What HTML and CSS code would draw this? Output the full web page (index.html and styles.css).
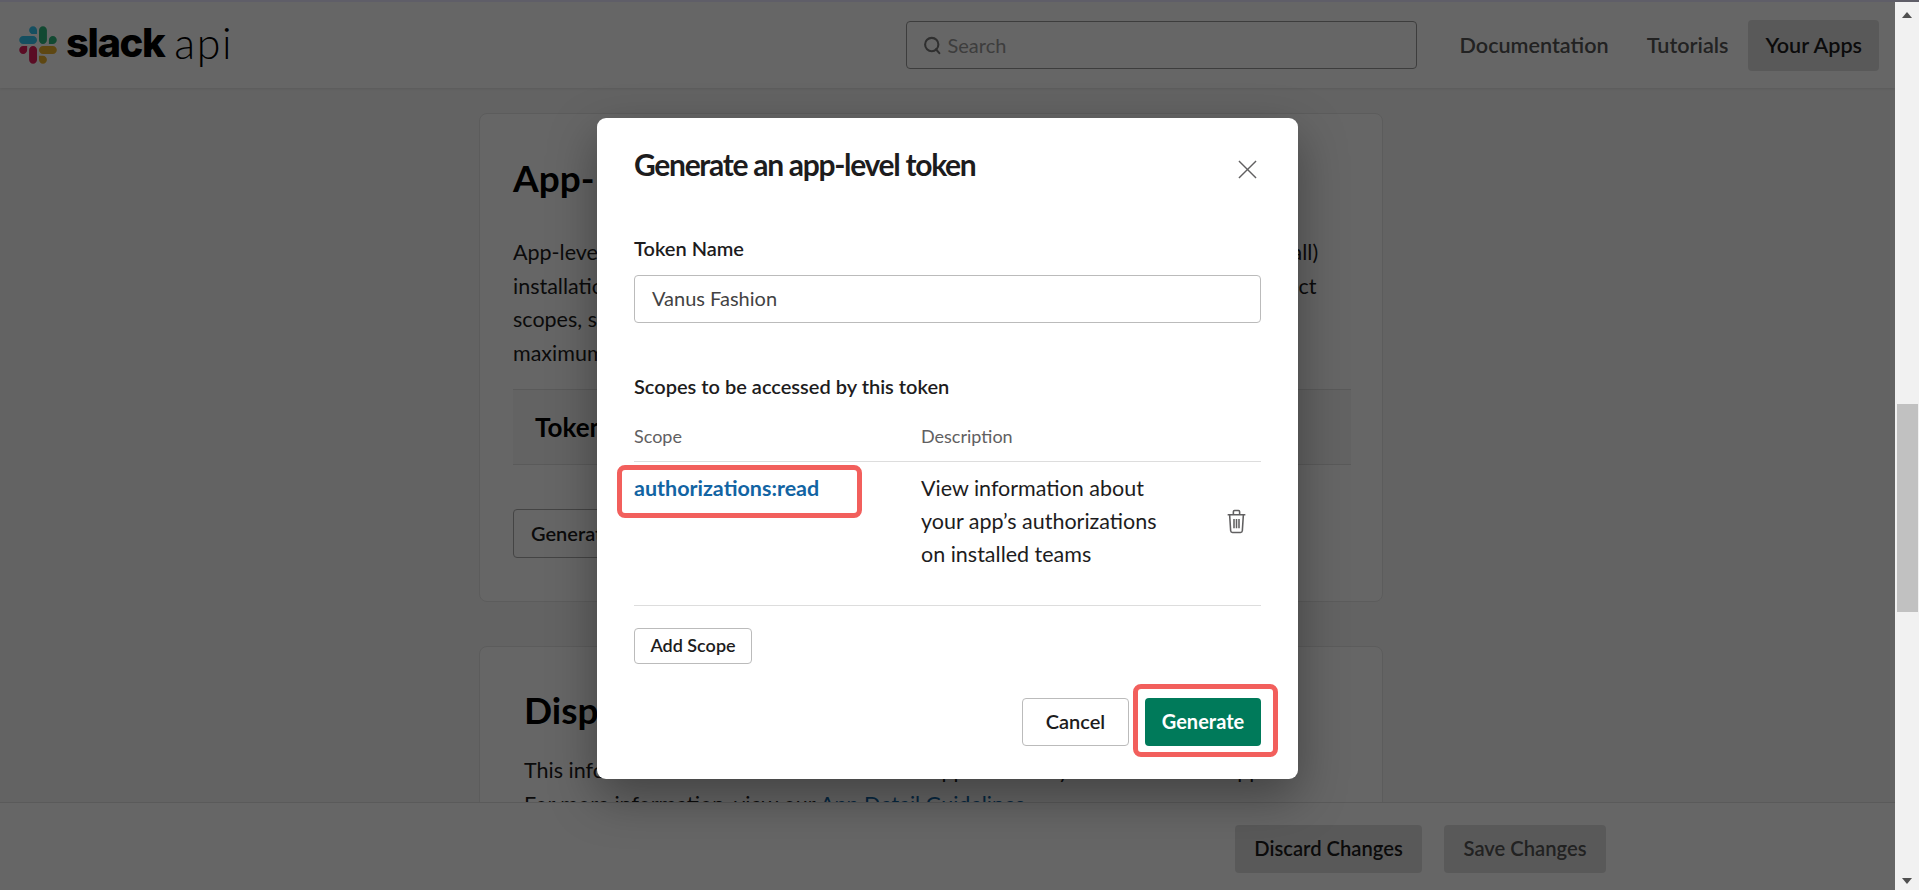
FILE: index.html
```html
<!DOCTYPE html>
<html lang="en">
<head>
<meta charset="utf-8">
<title>Slack API</title>
<link rel="stylesheet" href="styles.css">
</head>
<body>
<div class="top-strip"></div>
<div class="window">
  <div class="app">
    <header class="site-header">
      <a class="logo">
        <svg class="logo-mark" viewBox="0 0 127 127" aria-hidden="true">
          <path d="M27.2 80c0 7.3-5.9 13.2-13.2 13.2C6.7 93.2.8 87.3.8 80c0-7.3 5.9-13.2 13.2-13.2h13.2V80zm6.6 0c0-7.3 5.9-13.2 13.2-13.2 7.3 0 13.2 5.9 13.2 13.2v33c0 7.3-5.9 13.2-13.2 13.2-7.3 0-13.2-5.9-13.2-13.2V80z" fill="#E01E5A"/>
          <path d="M47 27c-7.3 0-13.2-5.9-13.2-13.2C33.8 6.5 39.7.6 47 .6c7.3 0 13.2 5.9 13.2 13.2V27H47zm0 6.7c7.3 0 13.2 5.9 13.2 13.2 0 7.3-5.9 13.2-13.2 13.2H13.9C6.6 60.1.7 54.2.7 46.9c0-7.3 5.9-13.2 13.2-13.2H47z" fill="#36C5F0"/>
          <path d="M99.9 46.9c0-7.3 5.9-13.2 13.2-13.2 7.3 0 13.2 5.9 13.2 13.2 0 7.3-5.9 13.2-13.2 13.2H99.9V46.9zm-6.6 0c0 7.3-5.9 13.2-13.2 13.2-7.3 0-13.2-5.9-13.2-13.2V13.8C66.9 6.5 72.8.6 80.1.6c7.3 0 13.2 5.9 13.2 13.2v33.1z" fill="#2EB67D"/>
          <path d="M80.1 99.8c7.3 0 13.2 5.9 13.2 13.2 0 7.3-5.9 13.2-13.2 13.2-7.3 0-13.2-5.9-13.2-13.2V99.8h13.2zm0-6.6c-7.3 0-13.2-5.9-13.2-13.2 0-7.3 5.9-13.2 13.2-13.2h33.1c7.3 0 13.2 5.9 13.2 13.2 0 7.3-5.9 13.2-13.2 13.2H80.1z" fill="#ECB22E"/>
        </svg>
        <span class="logo-slack">slack</span>
        <span class="logo-api">api</span>
      </a>
      <div class="search">
        <svg class="search-icon" viewBox="0 0 20 20" aria-hidden="true">
          <circle cx="9.2" cy="9" r="7" fill="none" stroke="currentColor" stroke-width="2.2"/>
          <path d="M13.6 14l3.6 4" fill="none" stroke="currentColor" stroke-width="2.2" stroke-linecap="round"/>
        </svg>
        <span class="search-text">Search</span>
      </div>
      <nav class="nav">
        <a class="nav-link">Documentation</a>
        <a class="nav-link">Tutorials</a>
        <a class="nav-link nav-active">Your Apps</a>
      </nav>
    </header>

    <main class="content">
      <section class="card card-tokens">
        <h2 class="card-title">App-Level Tokens</h2>
        <p class="card-text">App-level tokens allow your app to use platform features that apply on multiple (or all)<br>installations. These tokens are associated with your app that can allow you to connect<br>scopes, so you can control exactly what a token is allowed to access. You can have a<br>maximum of 50 tokens per app.</p>
        <div class="token-table-head">Token Name</div>
        <button class="btn btn-plain">Generate Token and Scopes</button>
      </section>
      <section class="card card-display">
        <h2 class="card-title">Display Information</h2>
        <p class="card-text">This information will be shown in the Slack app's directory and also on this app<br>For more information, view our <a class="link">App Detail Guidelines</a>.</p>
      </section>
    </main>

    <footer class="save-bar">
      <button class="btn btn-muted btn-discard">Discard Changes</button>
      <button class="btn btn-muted btn-save">Save Changes</button>
    </footer>

    <div class="overlay">
      <div class="modal">
        <div class="modal-head">
          <h1 class="modal-title">Generate an app-level token</h1>
          <svg class="modal-close" viewBox="0 0 20 20" aria-hidden="true">
            <path d="M1 1l18 18M19 1L1 19" fill="none" stroke="currentColor" stroke-width="1.5"/>
          </svg>
        </div>
        <label class="field-label">Token Name</label>
        <div class="field-input">Vanus Fashion</div>
        <h3 class="scopes-label">Scopes to be accessed by this token</h3>
        <div class="scope-grid scope-head">
          <span>Scope</span>
          <span>Description</span>
        </div>
        <div class="scope-grid scope-row">
          <a class="scope-name marked">authorizations:read</a>
          <span class="scope-desc">View information about your app’s authorizations on installed teams</span>
          <svg class="trash" viewBox="0 0 20 24" aria-hidden="true">
            <path d="M1.5 5.5h17M7 5V2.6c0-.6.5-1.1 1.1-1.1h3.8c.6 0 1.1.5 1.1 1.1V5M3.4 5.5l1 15.4c.1 1 .8 1.6 1.7 1.6h7.8c.9 0 1.6-.6 1.7-1.6l1-15.4M7.6 9.5v9M10 9.5v9M12.4 9.5v9" fill="none" stroke="currentColor" stroke-width="1.5"/>
          </svg>
        </div>
        <button class="btn btn-add">Add Scope</button>
        <div class="modal-actions">
          <button class="btn btn-cancel">Cancel</button>
          <button class="btn btn-generate marked-wide">Generate</button>
        </div>
      </div>
    </div>
  </div>
  <aside class="scrollbar">
    <span class="arrow arrow-up"></span>
    <span class="thumb"></span>
    <span class="arrow arrow-down"></span>
  </aside>
</div>
</body>
</html>
```

FILE: styles.css
```css
* { box-sizing: border-box; }

html, body {
  height: 100%;
  margin: 0;
  overflow: hidden;
}

body {
  display: flex;
  flex-direction: column;
  background: #fff;
  font-family: Lato, "Liberation Sans", sans-serif;
  color: #1d1c1d;
}

.top-strip {
  height: 2px;
  background: #5f5e68;
  flex: none;
}

.window {
  flex: 1;
  display: flex;
  min-height: 0;
}

.app {
  position: relative;
  flex: 1;
  display: flex;
  flex-direction: column;
  min-width: 0;
  background: #f8f8f8;
  overflow: hidden;
}

/* Header */
.site-header {
  flex: none;
  height: 86px;
  display: flex;
  align-items: center;
  padding: 0 16px 0 19px;
  background: #fff;
  box-shadow: 0 1px 3px rgba(0, 0, 0, .1);
  z-index: 1;
}

.logo {
  display: flex;
  align-items: center;
  color: #000;
  margin-right: auto;
}

.logo-mark {
  width: 38px;
  height: 38px;
  margin-right: 9px;
}

.logo-slack {
  font-family: Inter, sans-serif;
  font-weight: 800;
  font-size: 40px;
  line-height: 50px;
  letter-spacing: -1.4px;
  margin-right: 10px;
  margin-top: -4px;
}

.logo-api {
  font-family: Lato, sans-serif;
  font-weight: 300;
  font-size: 43px;
  line-height: 50px;
  letter-spacing: 1.6px;
  margin-top: -4px;
}

.search {
  width: 511px;
  height: 48px;
  display: flex;
  align-items: center;
  padding-left: 16px;
  border: 1px solid #999;
  border-radius: 4px;
  color: #999;
  font-size: 20px;
  margin-right: 25px;
}

.search-icon {
  width: 19px;
  height: 19px;
  color: #777;
  margin-right: 6px;
}

.nav {
  display: flex;
  gap: 2px;
  align-items: center;
}

.nav-link {
  display: block;
  padding: 0 18px;
  height: 51px;
  line-height: 51px;
  font-size: 21.6px;
  font-weight: 600;
  color: #555;
  border-radius: 4px;
}

.nav-active {
  padding: 0 17px;
  background: #dfdfdf;
  color: #1d1c1d;
}

/* Page content */
.content {
  flex: 1;
  min-height: 0;
  overflow: hidden;
  padding: 25px 0 0 479px;
}

.card {
  width: 904px;
  background: #fff;
  border: 1px solid #e6e6e6;
  border-radius: 8px;
}

.card-tokens {
  padding: 41px 33px 43px;
  margin-bottom: 44px;
}

.card-display {
  padding: 40px 44px 40px;
}

.card-title {
  margin: 0;
  font-size: 37px;
  line-height: 46px;
  font-weight: 700;
  color: #000;
}

.card-text {
  margin: 35px 0 0;
  font-size: 21.5px;
  line-height: 33.5px;
  color: #1d1c1d;
  white-space: nowrap;
}

.card-display .card-text {
  margin-top: 21px;
}

.link {
  color: #1264a3;
}

.token-table-head {
  margin-top: 19px;
  width: 838px;
  height: 76px;
  padding: 0 22px;
  line-height: 74px;
  background: #f8f8f8;
  border: 1px solid #e0e0e0;
  border-width: 1px 0;
  font-size: 26px;
  font-weight: 700;
  color: #000;
}

/* Buttons */
.btn {
  display: block;
  font-family: inherit;
  font-weight: 600;
  font-size: 20px;
  border-radius: 4px;
  border: 1px solid #bbb;
  background: #fff;
  color: #1d1c1d;
  padding: 0 0 2px;
}

.btn-plain {
  margin-top: 44px;
  height: 49px;
  padding: 0 17px 2px;
  border-color: #aaa;
}

.save-bar {
  flex: none;
  height: 88px;
  display: flex;
  justify-content: flex-end;
  gap: 22px;
  padding: 22px 289px 0 0;
  background: #fff;
  border-top: 1px solid #e0e0e0;
  z-index: 1;
}

.btn-muted {
  height: 48px;
  border: 0;
  background: #dfdfdf;
  font-size: 20.2px;
}

.btn-discard { width: 187px; }
.btn-save { width: 162px; color: #555; }

/* Dialog */
.overlay {
  position: absolute;
  inset: 0;
  z-index: 2;
  display: flex;
  justify-content: center;
  align-items: flex-start;
  padding-top: 116px;
  background: rgba(0, 0, 0, .6);
}

.modal {
  width: 701px;
  padding: 28px 37px 33px;
  background: #fff;
  border-radius: 9px;
  box-shadow: 0 18px 48px rgba(0, 0, 0, .35);
}

.modal-head {
  display: flex;
  justify-content: space-between;
  align-items: flex-start;
}

.modal-title {
  margin: -2px 0 2px;
  font-size: 30px;
  line-height: 40px;
  font-weight: 700;
  letter-spacing: -1.3px;
  color: #1d1c1d;
}

.modal-close {
  width: 19px;
  height: 19px;
  margin: 14px 4px 0 0;
  color: #616061;
}

.field-label {
  display: block;
  margin-top: 49px;
  font-size: 20px;
  line-height: 26px;
  font-weight: 600;
}

.field-input {
  margin-top: 14px;
  height: 48px;
  padding-left: 17px;
  line-height: 44px;
  font-size: 20px;
  color: #434243;
  border: 1px solid #bbb;
  border-radius: 4px;
}

.scopes-label {
  margin: 51px 0 0;
  font-size: 20px;
  line-height: 24px;
  font-weight: 600;
}

.scope-grid {
  display: grid;
  grid-template-columns: 287px 1fr 35px;
}

.scope-head {
  margin-top: 26px;
  padding-bottom: 13px;
  border-bottom: 1px solid #ddd;
  font-size: 18px;
  line-height: 24px;
  color: #616061;
}

.scope-row {
  align-items: center;
  padding: 10px 0 34px;
  border-bottom: 1px solid #ddd;
}

.scope-name {
  position: relative;
  align-self: start;
  justify-self: start;
  font-size: 21.5px;
  line-height: 33px;
  font-weight: 700;
  color: #1264a3;
}

.marked::after {
  content: "";
  position: absolute;
  top: -7px;
  bottom: -13px;
  left: -17px;
  right: -43px;
  border: 5px solid #f25f5c;
  border-radius: 8px;
}

.scope-desc {
  width: 250px;
  font-size: 21.5px;
  line-height: 33px;
  color: #1d1c1d;
}

.trash {
  width: 21px;
  height: 25px;
  color: #616061;
}

.btn-add {
  margin-top: 22px;
  width: 118px;
  height: 36px;
  font-size: 18px;
}

.modal-actions {
  display: flex;
  justify-content: flex-end;
  gap: 16px;
  margin-top: 34px;
}

.btn-cancel,
.btn-generate {
  height: 48px;
  font-size: 20px;
}

.btn-cancel {
  width: 107px;
}

.btn-generate {
  position: relative;
  width: 116px;
  border: 0;
  font-weight: 700;
  background: #007a5a;
  color: #fff;
}

.marked-wide::after {
  content: "";
  position: absolute;
  top: -14px;
  bottom: -11px;
  left: -12px;
  right: -17px;
  border: 5px solid #f25f5c;
  border-radius: 8px;
}

/* Scrollbar */
.scrollbar {
  flex: none;
  width: 24px;
  display: flex;
  flex-direction: column;
  align-items: center;
  background: #f1f1f1;
}

.arrow {
  width: 0;
  height: 0;
  border-left: 5.5px solid transparent;
  border-right: 5.5px solid transparent;
}

.arrow-up {
  margin-top: 10px;
  border-bottom: 6px solid #505050;
}

.arrow-down {
  margin-top: 266px;
  border-top: 6px solid #505050;
}

.thumb {
  width: 21px;
  height: 208px;
  margin-top: 386px;
  background: #c1c1c1;
}
```
